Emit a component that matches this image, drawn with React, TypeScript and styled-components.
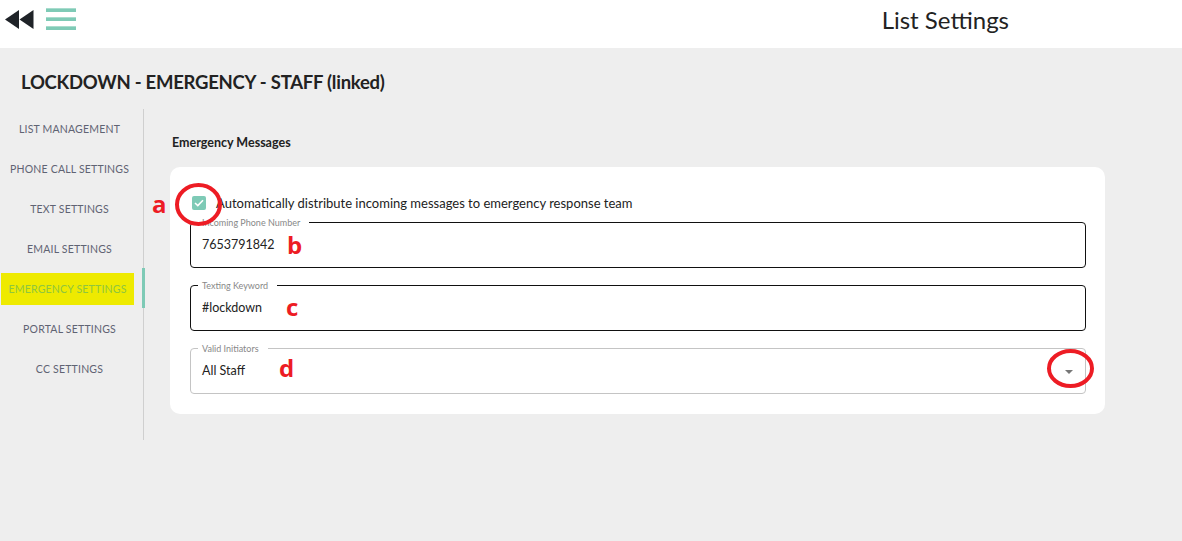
import React from 'react'
import styled, { createGlobalStyle } from 'styled-components'

const GlobalStyle = createGlobalStyle`
  html, body {
    margin: 0;
    padding: 0;
    background: #eeeeee;
    font-family: Lato, 'Noto Sans', sans-serif;
    color: #222;
  }
`

const Page = styled.div`
  width: 1182px;
  min-height: 541px;
  background: #eeeeee;
`

const Header = styled.header`
  height: 48px;
  background: #fff;
  display: flex;
  align-items: center;
  padding: 0 0 0 5px;
`

const IconButton = styled.button`
  border: none;
  background: none;
  padding: 0;
  display: flex;
  align-items: center;
  margin-right: 12px;
  margin-top: -10px;
`

const Burger = styled.div`
  display: flex;
  flex-direction: column;
  gap: 5px;
  width: 30px;
  margin-top: -10px;
  & > span {
    height: 3px;
    background: #7ecab6;
    border-top: 1px solid #a9dccd;
  }
`

const PageTitle = styled.h1`
  margin: -10px 173px 0 auto;
  font-size: 24px;
  font-weight: 400;
  color: #222;
`

const ListName = styled.h2`
  margin: 0;
  padding: 23px 21px 16px;
  font-size: 18.5px;
  font-weight: 700;
  color: #222;
  letter-spacing: -0.25px;
`

const Body = styled.div`
  display: flex;
  align-items: flex-start;
`

const Sidebar = styled.nav`
  width: 143px;
  height: 331px;
  border-right: 1px solid #cfcfcf;
  position: relative;
`

const NavItem = styled.div<{ $active?: boolean }>`
  height: 40px;
  display: flex;
  align-items: center;
  justify-content: center;
  padding-right: 4px;
  font-size: 10.5px;
  letter-spacing: 0.2px;
  text-transform: uppercase;
  color: ${p => (p.$active ? '#8ec63f' : '#5f6373')};
  position: relative;

  ${p => p.$active && `
    &::after {
      content: '';
      position: absolute;
      right: -2px;
      top: -1px;
      width: 3px;
      height: 40px;
      background: #7ecab6;
    }
  `}
`

const Highlight = styled.span`
  display: flex;
  align-items: center;
  justify-content: center;
  margin: 0 auto 0 1px;
  width: 133px;
  height: 32px;
  background: #eeea00;
`

const Content = styled.main`
  flex: 1;
  padding: 26px 0 0 26px;
`

const SectionTitle = styled.h3`
  margin: 0 0 17px 2px;
  font-size: 12.5px;
  font-weight: 700;
  color: #222;
`

const Card = styled.section`
  position: relative;
  width: 935px;
  box-sizing: border-box;
  background: #fff;
  border-radius: 10px;
  padding: 28px 19px 20px 20px;
  display: flex;
  flex-direction: column;
  gap: 17px;
`

const CheckRow = styled.label`
  display: flex;
  align-items: center;
  gap: 10px;
  padding-left: 2px;
  font-size: 13px;
  color: #222;
  height: 16px;
  margin-bottom: -6px;
`

const CheckBox = styled.span`
  width: 14px;
  height: 14px;
  border-radius: 2px;
  background: #7ecab6;
  display: flex;
  align-items: center;
  justify-content: center;
`

const Field = styled.div<{ $muted?: boolean }>`
  height: 46px;
  box-sizing: border-box;
  padding: 0 11px;
  border: 1px solid ${p => (p.$muted ? '#c4c4c4' : '#111')};
  border-radius: 4px;
  position: relative;
  display: flex;
  align-items: center;
`

const FieldLabel = styled.span`
  position: absolute;
  left: 7px;
  top: -6px;
  padding: 0 9px 0 4px;
  background: #fff;
  font-size: 9px;
  color: #888;
  line-height: 11px;
`

const Value = styled.div`
  font-size: 12.5px;
  color: #222;
  margin-top: -2px;
`

const Caret = styled.span`
  position: absolute;
  right: 12px;
  top: 21px;
  width: 0;
  height: 0;
  border-left: 4.5px solid transparent;
  border-right: 4.5px solid transparent;
  border-top: 4.5px solid #777;
`

const Mark = styled.span<{ $x: number; $y: number }>`
  position: absolute;
  left: ${p => p.$x}px;
  top: ${p => p.$y}px;
  font-family: 'Open Sans', Lato, sans-serif;
  font-weight: 700;
  font-size: 24px;
  line-height: 1;
  color: #ed1c24;
  pointer-events: none;
`

const Ring = styled.svg<{ $x: number; $y: number }>`
  position: absolute;
  left: ${p => p.$x}px;
  top: ${p => p.$y}px;
  pointer-events: none;
  overflow: visible;
`

const navItems = [
  'List Management',
  'Phone Call Settings',
  'Text Settings',
  'Email Settings',
  'Emergency Settings',
  'Portal Settings',
  'CC Settings',
]

export default function App() {
  return (
    <Page>
      <GlobalStyle />
      <Header>
        <IconButton aria-label="back">
          <svg width="29" height="19" viewBox="0 0 29 19">
            <path d="M0 9.5 L14 0 L14 19 Z" fill="#1f2328" />
            <path d="M14.5 9.5 L28.5 0 L28.5 19 Z" fill="#1f2328" />
          </svg>
        </IconButton>
        <Burger>
          <span />
          <span />
          <span />
        </Burger>
        <PageTitle>List Settings</PageTitle>
      </Header>

      <ListName>LOCKDOWN - EMERGENCY - STAFF (linked)</ListName>

      <Body>
        <Sidebar>
          {navItems.map(item =>
            item === 'Emergency Settings'
              ? (
                  <NavItem key={item} $active>
                    <Highlight>{item}</Highlight>
                  </NavItem>
                )
              : <NavItem key={item}>{item}</NavItem>,
          )}
        </Sidebar>

        <Content>
          <SectionTitle>Emergency Messages</SectionTitle>
          <Card>
            <CheckRow>
              <CheckBox>
                <svg width="10" height="8" viewBox="0 0 10 8">
                  <path d="M1 4 L3.8 6.6 L9 1.2" stroke="#fff" strokeWidth="1.6" fill="none" />
                </svg>
              </CheckBox>
              Automatically distribute incoming messages to emergency response team
            </CheckRow>

            <Field>
              <FieldLabel>Incoming Phone Number</FieldLabel>
              <Value>7653791842</Value>
            </Field>

            <Field>
              <FieldLabel>Texting Keyword</FieldLabel>
              <Value>#lockdown</Value>
            </Field>

            <Field $muted>
              <FieldLabel>Valid Initiators</FieldLabel>
              <Value>All Staff</Value>
              <Caret />
            </Field>

            <Mark $x={-18} $y={25}>a</Mark>
            <Ring $x={5} $y={16} width="47" height="43">
              <ellipse cx="23.5" cy="21.5" rx="21.5" ry="19.5" fill="none" stroke="#ed1c24" strokeWidth="4" />
            </Ring>
            <Mark $x={117} $y={66}>b</Mark>
            <Mark $x={116} $y={128}>c</Mark>
            <Mark $x={109} $y={189}>d</Mark>
            <Ring $x={877} $y={182} width="47" height="39">
              <ellipse cx="23.5" cy="19.5" rx="21.5" ry="17.5" fill="none" stroke="#ed1c24" strokeWidth="4" />
            </Ring>
          </Card>
        </Content>
      </Body>
    </Page>
  )
}
